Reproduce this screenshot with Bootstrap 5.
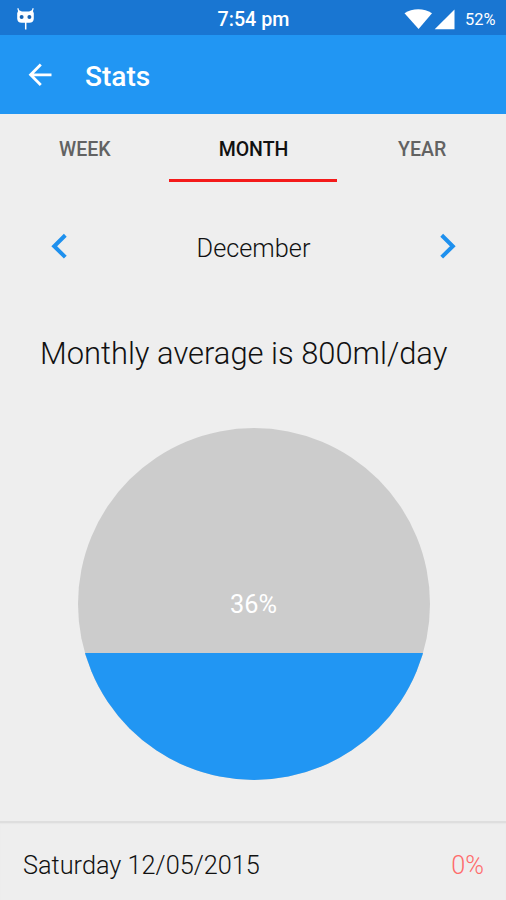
<!DOCTYPE html>
<html lang="en">
<head>
<meta charset="utf-8">
<meta name="viewport" content="width=device-width, initial-scale=1">
<title>Stats</title>
<link href="https://cdn.jsdelivr.net/npm/bootstrap@5.3.0/dist/css/bootstrap.min.css" rel="stylesheet">
<style>
body { font-family: Roboto, "Liberation Sans", sans-serif; background: #eee; color: #111; height: 900px; overflow: hidden; }
svg { display: block; flex: none; }
.status-bar { height: 35px; background: #1976d2; color: #fff; }
.clock { font-size: 19.7px; font-weight: 500; line-height: 35px; padding: 2px 0 0 1px; }
.battery { font-size: 16.4px; line-height: 35px; padding-top: 2px; width: 33px; margin-left: 9px; }
.app-bar { height: 79px; background: #2196f3; color: #fff; padding-left: 28px; }
.app-title { font-size: 28.1px; font-weight: 500; margin: 0 0 0 33px; line-height: 79px; padding-top: 4px; }
.period-tabs { height: 68px; }
.period-tabs .nav-link { height: 68px; padding: 2px 0 0 1px; font-size: 19.5px; font-weight: 500; line-height: 68px; color: #626262; border-radius: 0; }
.period-tabs .nav-link.active { color: #111; border-bottom: 3px solid #f41a1a; }
.month-nav { height: 128px; padding: 0 49px 0 50px; }
.month-name { font-size: 25.3px; font-weight: 300; padding-top: 5px; }
.average { font-size: 30.9px; font-weight: 300; line-height: 86px; padding: 1px 0 0 40px; margin: 0; white-space: nowrap; }
.chart { width: 352px; height: 352px; margin: 31px 0 0 77.5px; background: #ccc; }
.fill { background: #2196f3; }
.percent { font-size: 25.3px; color: #fff; padding-top: 2px; }
.day-row { height: 79px; margin-top: 41px; padding: 8px 22px 0 23px; border-top: 2px solid #dedede; box-shadow: inset 0 1px 1px #e7e7e7; font-size: 25.3px; font-weight: 300; }
.rate { color: #ff6b6b; }
</style>
</head>
<body>
<header>
  <div class="status-bar row g-0">
    <div class="col-4 d-flex align-items-center ps-3">
      <svg width="20" height="24" viewBox="0 0 20 24" aria-label="Notification">
        <g fill="none" stroke="#fff" stroke-width="1.2"><path d="M3 5 1.800 1.200M16 5l1.200-3.800"/></g>
        <path fill="#fff" d="M2.500 3 6 4.500h7L16.500 3l1.300 3.300v5.200c0 2.800-1.700 4.300-4.500 4.300H5.700c-2.800 0-4.500-1.500-4.500-4.300V6.300z"/>
        <circle cx="5.600" cy="9.900" r="2" fill="#1764b5"/><circle cx="13.400" cy="9.900" r="2" fill="#1764b5"/>
        <path d="M9.700 15v7.500" stroke="#fff" stroke-width="1.500"/>
      </svg>
    </div>
    <div class="col-4 text-center clock">7:54 pm</div>
    <div class="col-4 d-flex align-items-center justify-content-end pe-2">
      <svg width="52" height="22" viewBox="0 0 52 22" fill="#fff" aria-label="Wi-Fi and signal">
        <path d="M0.500 5.200C8 .2 20-.1 28 5.200L14.600 21z"/>
        <path d="M50.500 1.500V21.300H30.700z"/>
      </svg>
      <span class="battery text-nowrap">52%</span>
    </div>
  </div>
  <div class="app-bar d-flex align-items-center">
    <svg width="24" height="24" viewBox="0 0 24 24" fill="none" stroke="#fff" stroke-width="2.800" aria-label="Back"><path d="M12.800 1.600 2.600 11.800l10.200 10.200M2.600 11.800H23.500"/></svg>
    <h1 class="app-title">Stats</h1>
  </div>
</header>
<main>
  <nav class="nav nav-fill row g-0 period-tabs">
    <a class="nav-link col-4" href="#">WEEK</a>
    <a class="nav-link col-4 active" href="#">MONTH</a>
    <a class="nav-link col-4" href="#">YEAR</a>
  </nav>
  <div class="month-nav d-flex align-items-center justify-content-between">
    <svg width="18" height="26" viewBox="0 0 18 26" fill="none" stroke="#1e90ee" stroke-width="4" aria-label="Previous"><path d="M15.300 2.300 4.200 13.200l11.100 10.900"/></svg>
    <span class="month-name">December</span>
    <svg width="18" height="26" viewBox="0 0 18 26" fill="none" stroke="#1e90ee" stroke-width="4" aria-label="Next"><path d="M2.700 2.300l11.100 10.900L2.700 24.100"/></svg>
  </div>
  <p class="average">Monthly average is 800ml/day</p>
  <div class="chart rounded-circle overflow-hidden position-relative d-flex align-items-center justify-content-center">
    <div class="fill position-absolute bottom-0 start-0 w-100" style="height:36%"></div>
    <span class="percent position-relative">36%</span>
  </div>
  <div class="day-row d-flex align-items-center justify-content-between">
    <span>Saturday 12/05/2015</span>
    <span class="rate">0%</span>
  </div>
</main>
<script src="https://cdn.jsdelivr.net/npm/bootstrap@5.3.0/dist/js/bootstrap.bundle.min.js"></script>
</body>
</html>
